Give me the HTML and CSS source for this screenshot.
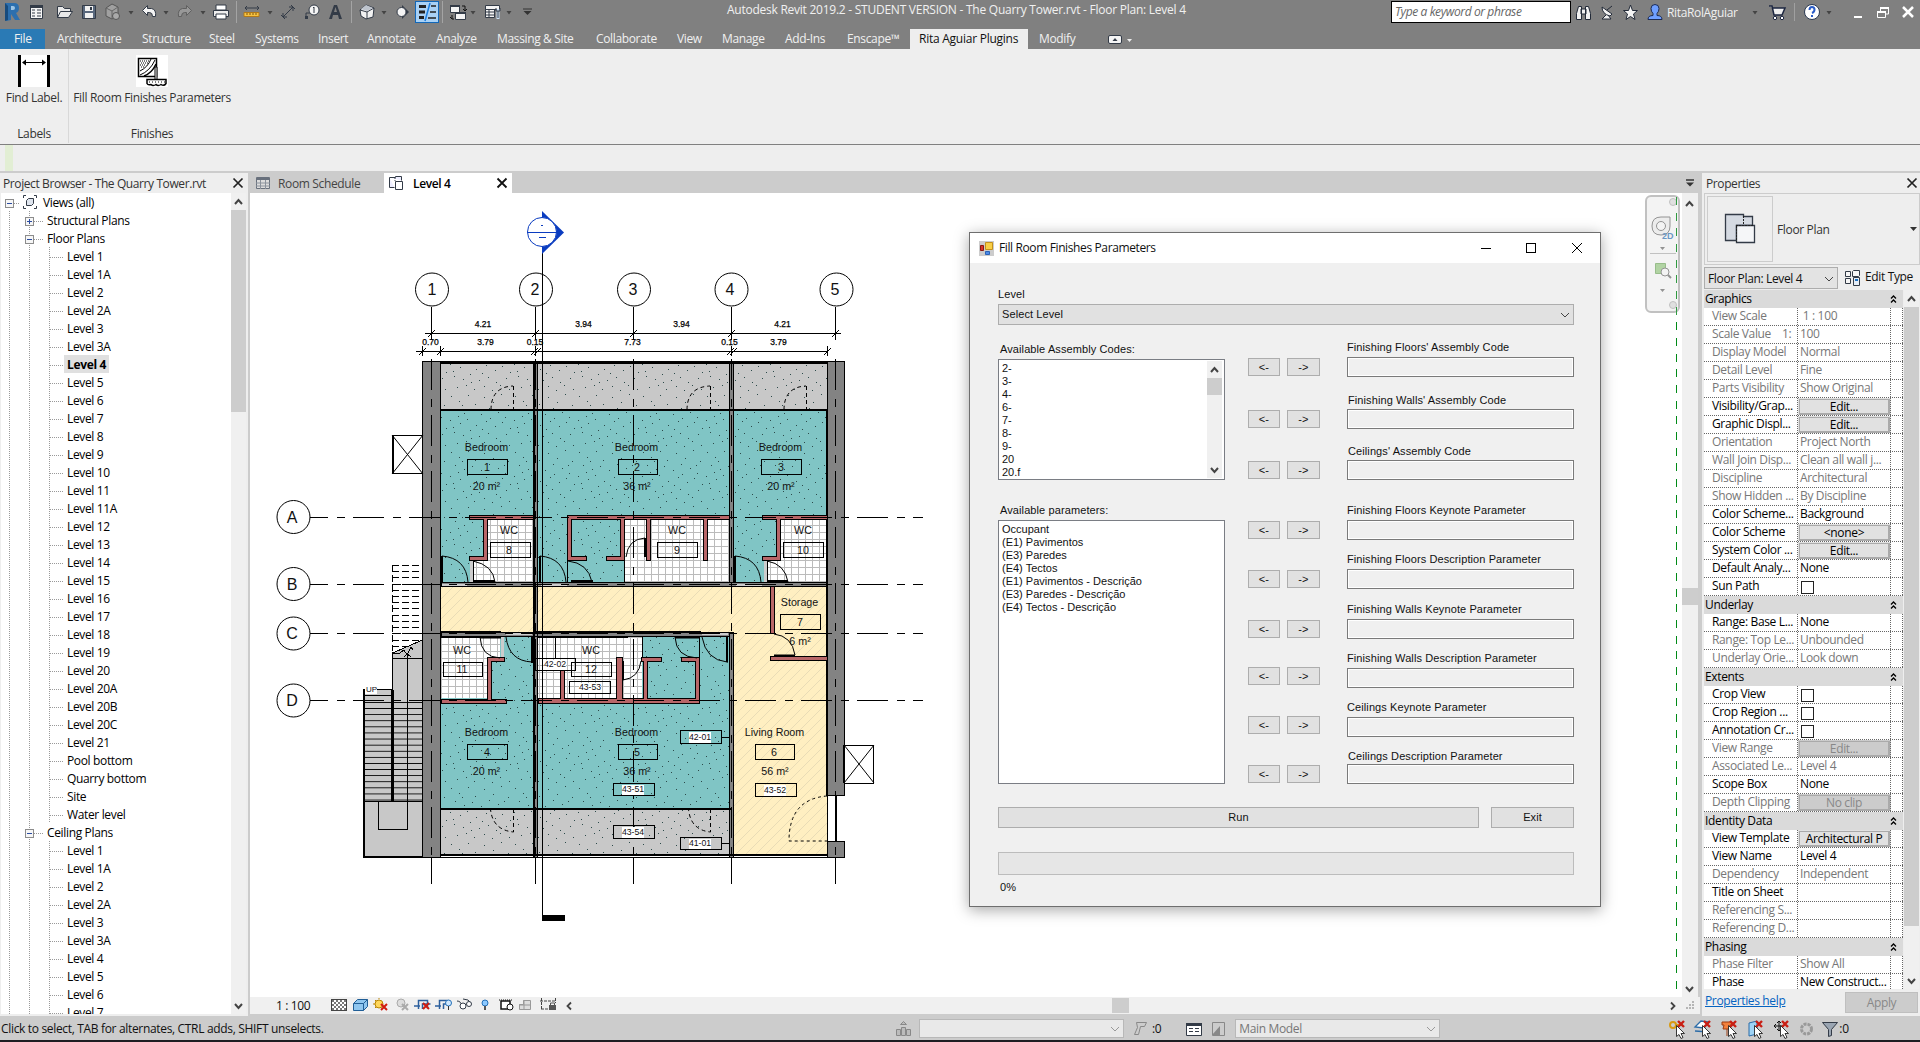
FILE: index.html
```html
<!DOCTYPE html>
<html lang="en">
<head>
<meta charset="utf-8">
<title>Autodesk Revit 2019.2 - The Quarry Tower.rvt</title>
<link rel="stylesheet" href="styles.css">
</head>
<body>
<div class="app">
<header class="titlebar">
  <svg class="qat" width="540" height="29" viewBox="0 0 540 29">
    <path d="M5 3h9q5 0 5 5q0 4-3 5l4 7h-5l-4-6v6l-5 1z" fill="#2c6fae"/><path d="M11 6h2q2 0 2 2t-2 2h-2z" fill="#9cc4e4"/><path d="M5 3l3 3v14l-3 1z" fill="#174b7d"/>
    <path d="M30.500 5.500h12v13h-12z" fill="#f4f4f4" stroke="#333b47"/><path d="M30 5h13v3h-13z" fill="#333b47"/><path d="M32 10h3M32 13h3M32 16h3M37 10h4M37 13h4M37 16h4" stroke="#333b47"/>
    <path d="M57.500 17.500v-11h5l2 2h6v3M57.500 17.500l3-6h12l-4 6z" fill="#e8e8e8" stroke="#333b47"/>
    <path d="M82.500 5.500h13v13h-13z" fill="#59687d" stroke="#333b47"/><path d="M85 6h8v5h-8zM85 13h8v5h-8z" fill="#f1f1f1"/><path d="M90 7h2v3h-2z" fill="#333b47"/>
    <path d="M106 8l6-4 6 3v8l-6 4-6-3z" fill="#a0a0a0" stroke="#555"/><path d="M106 8l6 3 6-4M112 11v8" stroke="#666" fill="none"/><circle cx="116" cy="16" r="3.500" fill="#aaa" stroke="#555"/>
    <path d="M128.500 11h5l-2.500 3.500zM163.500 11h5l-2.500 3.500zM200.500 11h5l-2.500 3.500zM267.500 11h5l-2.500 3.500zM381.500 11h5l-2.500 3.500zM470.500 11h5l-2.500 3.500zM506.500 11h5l-2.500 3.500z" fill="#444"/>
    <path d="M142.500 10.500l5-5v3h4q5 1 4 8h-3q0-4-3-4h-2v3z" fill="#f4f4f4" stroke="#333b47"/>
    <path d="M191.500 10.500l-5-5v3h-4q-5 1-4 8h3q0-4 3-4h2v3z" fill="#989898" stroke="#606060"/>
    <path d="M216 5h10v5h-10z" fill="#fff" stroke="#333b47"/><path d="M213.500 10.500h15v6h-15z" fill="#eee" stroke="#333b47"/><path d="M216 14h10v5h-10z" fill="#fff" stroke="#333b47"/>
    <path d="M236.500 1v22M351.500 1v22M442.500 1v22" stroke="#a4a4a4"/>
    <path d="M245 8h14M247 6l-2 2 2 2M257 6l2 2-2 2" stroke="#333b47" fill="none"/><path d="M244 12.500h15v4h-15z" fill="#f5c242" stroke="#b37a18"/><path d="M247 13v2M250 13v2M253 13v2M256 13v2" stroke="#7d5512"/>
    <path d="M283 17l10-10M281 15l4 4M291 5l4 4M283 13v4h4M293 11v-4h-4" stroke="#333b47" fill="none"/>
    <path d="M306 19v-6h5" stroke="#333b47" fill="none"/><path d="M305 16h3v3h-3z" fill="#333b47"/><circle cx="314" cy="10" r="5" fill="#f4f4f4" stroke="#333b47"/><path d="M313 8l1-1v6" stroke="#333b47" fill="none"/>
    <path d="M329 19l5-14h3l5 14h-3l-1-4h-5l-1 4zM334 12h3l-1.500-5z" fill="#333b47" fill-rule="evenodd"/>
    <path d="M360 10l6-5 8 3-1 9-7 2-5-3z" fill="#f1f1f1" stroke="#333b47"/><path d="M360 10l7 2 7-4M367 12v7" fill="none" stroke="#333b47"/><path d="M361 9l5-4 7 3-6 3z" fill="#bfc5ce"/>
    <path d="M402 5l7 7-7 7z" fill="#333b47"/><circle cx="401.500" cy="12" r="4.500" fill="#f4f4f4" stroke="#333b47"/>
    <rect x="415.500" y="1.500" width="23" height="21" fill="#a9d1f5" stroke="#1267b8"/><path d="M419 6.500h7M419 12h6M419 17.500h5" stroke="#222" stroke-width="3"/><path d="M431 6h5M430 12h6M428 18h8" stroke="#222" stroke-width="1.500"/><path d="M430 3l-5 18" stroke="#1b7ee0" stroke-width="1.500"/>
    <path d="M450.500 5.500h9v7h-9zM455.500 12.500h10v7h-10z" fill="#f4f4f4" stroke="#333b47"/><path d="M450 5h10v2h-10zM455 12h11v2h-11z" fill="#333b47"/><path d="M462 6h3v4M463 9l2 2 2-2M452 19v-4M450 17l2 2h2" stroke="#111" fill="none"/>
    <path d="M485.500 5.500h14v4h-14zM485.500 9.500h9v8h-9z" fill="#f4f4f4" stroke="#333b47"/><path d="M485 12h9M485 15h9M489 9v8" stroke="#333b47"/><path d="M498 9v10" stroke="#cfe3f7" stroke-width="3"/><path d="M496 8v3h4v-3M498 11v7" stroke="#333b47" fill="none"/>
    <path d="M523 9h9" stroke="#333"/><path d="M523.500 11h8l-4 4z" fill="#333"/>
  </svg>
  <div class="app-title"><span>Autodesk Revit 2019.2 - STUDENT VERSION - The Quarry Tower.rvt - Floor Plan: Level 4</span></div>
  <div class="search">Type a keyword or phrase</div>
  <svg width="95" height="29" viewBox="1572 0 95 29">
    <path d="M1576.500 19.500v-6l2-7h3v13zM1590.500 19.500v-6l-2-7h-3v13zM1581 9h5v5h-5z" fill="#f1f1f1" stroke="#222a38"/>
    <path d="M1602 7q0 7 8 9l2-2zM1606 15l-4 4h9l-3-4M1607 10l5-4" fill="#f1f1f1" stroke="#222a38"/>
    <path d="M1630.500 5l2 5.500h5l-4 3.500 1.500 5.500-4.500-3-4.500 3 1.500-5.500-4-3.500h5z" fill="#f4f4f4" stroke="#222a38"/>
    <path d="M1648 19.500q0-4 5-4v-2q-2-2-2-5 0-4 4-4t4 4q0 3-2 5v2q5 0 5 4z" fill="#6f9fff" stroke="#1c2b55"/>
  </svg>
  <span class="user">RitaRolAguiar</span>
  <svg width="180" height="29" viewBox="1740 0 180 29">
    <path d="M1752.500 11h5l-2.500 3.500zM1826.500 11h5l-2.500 3.500z" fill="#444"/>
    <path d="M1769 6h3l2 9h8l3-7h-12" fill="#eee" stroke="#1c2640" stroke-width="1.500"/><circle cx="1775" cy="18" r="1.700" fill="#fff" stroke="#1c2640"/><circle cx="1782" cy="18" r="1.700" fill="#fff" stroke="#1c2640"/>
    <path d="M1794.500 3v18" stroke="#a0a0a0"/>
    <circle cx="1812" cy="12" r="7.500" fill="#fff" stroke="#2a3850"/><path d="M1809.500 10q0-3 2.500-3t2.500 2.500-2.500 3.500M1812 15v2" stroke="#2a5cc8" stroke-width="2" fill="none"/>
    <path d="M1854 17h8" stroke="#fff" stroke-width="2"/><path d="M1880.500 11v-3h8v6h-3M1877.500 11.500h8v6h-8z" stroke="#fff" fill="none"/><path d="M1880 8h9M1877 12h9" stroke="#fff" stroke-width="2"/><path d="M1903 7l10 10M1913 7l-10 10" stroke="#fff" stroke-width="2.500"/>
  </svg>
</header>
<nav class="tabs">
  <span class="file">File</span><span>Architecture</span><span>Structure</span><span>Steel</span><span>Systems</span><span>Insert</span><span>Annotate</span><span>Analyze</span><span>Massing &amp; Site</span><span>Collaborate</span><span>View</span><span>Manage</span><span>Add-Ins</span><span>Enscape™</span><span class="on">Rita Aguiar Plugins</span><span>Modify</span>
  <svg width="30" height="20" viewBox="0 0 30 20"><rect x="1.500" y="6.500" width="13" height="8" rx="1.500" fill="#f4f4f4" stroke="#333b47"/><path d="M5.500 12h5l-2.500-3z" fill="#333b47"/><path d="M20 10h5l-2.500 3z" fill="#eee"/></svg>
</nav>
<section class="ribbon">
  <div class="rpanel labels">
    <svg width="32" height="32" viewBox="0 0 32 32"><path d="M0 0h32v32H0z" fill="#fff"/><path d="M1.500 0v32M30.500 0v32" stroke="#000" stroke-width="3"/><path d="M5 7.500h22" stroke="#000"/><path d="M4 7.500l4-3v6zM28 7.500l-4-3v6z"/></svg>
    <span>Find Label.</span><span class="cap">Labels</span>
  </div>
  <div class="rpanel finishes">
    <svg width="32" height="32" viewBox="0 0 32 32"><path d="M0 0h32v32H0z" fill="#fff"/><rect x="2.500" y="3.500" width="18" height="18" fill="none" stroke="#000" stroke-width="1.500"/><path d="M4 16q8-4 11-12M4 20q10-4 15-15" stroke="#000" fill="none"/><path d="M8 21q8-3 12-12" stroke="#000" stroke-width="1.500" fill="none"/><path d="M4 6h9M5 8h7M4 10h6M5 12h4" stroke="#000" stroke-dasharray="1 1"/><path d="M19 12h2v13h-2z" fill="#fff" stroke="#000"/><path d="M11 24.500h19v4q-2 3-5 1-3 2-5 0-3 2-5 0-3 1-4-1z" fill="#fff" stroke="#000" stroke-width="1.500"/><path d="M13 27h16" stroke="#000" stroke-dasharray="1 2"/></svg>
    <span>Fill Room Finishes Parameters</span><span class="cap">Finishes</span>
  </div>
</section>
<div class="optbar"><i></i></div>

<main class="work">
<aside class="browser">
  <div class="phead"><span>Project Browser - The Quarry Tower.rvt</span><svg width="12" height="12" viewBox="0 0 12 12"><path d="M1.500 1.500l9 9M10.500 1.500l-9 9" stroke="#222" stroke-width="1.700"/></svg></div>
  <div class="treebox">
    <ul class="tree">
      <li class="l0"><b class="box"></b><svg width="16" height="16" viewBox="0 0 16 16"><path d="M4 1.500H1.500V4M12 1.500h2.500V4M4 14.500H1.500V12M12 14.500h2.500V12" stroke="#333b47" fill="none"/><path d="M4.500 6.500l2-2h5v5l-2 2h-5z" fill="#dfe5ee" stroke="#333b47"/></svg>Views (all)</li>
      <li class="l1"><b class="box plus"></b>Structural Plans</li>
      <li class="l1"><b class="box"></b>Floor Plans</li>
      <li>Level 1</li><li>Level 1A</li><li>Level 2</li><li>Level 2A</li><li>Level 3</li><li>Level 3A</li><li class="cur"><em>Level 4</em></li><li>Level 5</li><li>Level 6</li><li>Level 7</li><li>Level 8</li><li>Level 9</li><li>Level 10</li><li>Level 11</li><li>Level 11A</li><li>Level 12</li><li>Level 13</li><li>Level 14</li><li>Level 15</li><li>Level 16</li><li>Level 17</li><li>Level 18</li><li>Level 19</li><li>Level 20</li><li>Level 20A</li><li>Level 20B</li><li>Level 20C</li><li>Level 21</li><li>Pool bottom</li><li>Quarry bottom</li><li>Site</li><li class="end">Water level</li>
      <li class="l1"><b class="box"></b>Ceiling Plans</li>
      <li>Level 1</li><li>Level 1A</li><li>Level 2</li><li>Level 2A</li><li>Level 3</li><li>Level 3A</li><li>Level 4</li><li>Level 5</li><li>Level 6</li><li>Level 7</li>
    </ul>
    <div class="vbar"><svg width="15" height="17" viewBox="0 0 15 17"><path d="M4 11l3.500-4 3.500 4" stroke="#444" stroke-width="2" fill="none"/></svg><i class="th1"></i><svg class="dn" width="15" height="17" viewBox="0 0 15 17"><path d="M4 7l3.500 4 3.500-4" stroke="#444" stroke-width="2" fill="none"/></svg></div>
  </div>
</aside>

<section class="center">
  <div class="viewtabs">
    <div class="vt"><svg width="16" height="14" viewBox="0 0 16 14"><path d="M1.500 1.500h13v11h-13z" fill="#ddd" stroke="#68707c"/><path d="M1 2h14v2H1z" fill="#68707c"/><path d="M1 7h14M1 10h14M5.500 4v9M10.500 4v9" stroke="#8b929c"/></svg><span>Room Schedule</span></div>
    <div class="vt on"><svg width="16" height="16" viewBox="0 0 16 16"><path d="M1.500 2.500h6v-1h6v4M1.500 2.500v10h5" fill="#eef" stroke="#333b47"/><path d="M7.500 6.500h7v8h-7z" fill="#fff" stroke="#333b47"/><path d="M7 3v4" stroke="#333b47" stroke-dasharray="1 1"/></svg><span>Level 4</span><svg class="x" width="12" height="12" viewBox="0 0 12 12"><path d="M1.500 1.500l9 9M10.500 1.500l-9 9" stroke="#111" stroke-width="1.800"/></svg></div>
    <svg class="menu" width="10" height="8" viewBox="0 0 10 8"><path d="M1 1h8" stroke="#333" stroke-width="1.500"/><path d="M1 3.500h8l-4 4z" fill="#333"/></svg>
  </div>
  <div class="canvasrow">
  <svg class="plan" width="1432" height="804" viewBox="250 193 1432 804" shape-rendering="crispEdges">
    <defs>
      <pattern id="dots" width="64" height="56" patternUnits="userSpaceOnUse"><path d="M3 4h1M11 9h1M20 3h1M27 12h1M36 5h1M45 10h1M53 2h1M60 13h1M7 17h1M16 21h1M24 18h1M33 22h1M41 16h1M50 20h1M57 25h1M2 28h1M12 31h1M19 27h1M28 33h1M38 29h1M47 34h1M54 30h1M62 36h1M6 40h1M15 43h1M22 38h1M31 44h1M40 41h1M48 46h1M58 42h1M9 51h1M18 49h1M26 53h1M36 50h1M44 54h1M52 49h1M61 53h1M14 13h1M42 26h1M5 35h1M34 37h1M56 17h1M23 46h1M10 24h1" stroke="#2c4a4a" transform="translate(0 .5)"/></pattern>
      <pattern id="tile" width="7" height="7" patternUnits="userSpaceOnUse"><path d="M0 .5h7M.5 0v7" stroke="#bbb"/></pattern>
      <pattern id="hatch" width="10" height="10" patternUnits="userSpaceOnUse"><path d="M-1 11L11 -1M-1 1L1 -1M9 11L11 9" stroke="#e9dcb6" shape-rendering="auto"/></pattern>
      <pattern id="tread" width="10" height="6.100" y="702" patternUnits="userSpaceOnUse"><path d="M0 .5h10" stroke="#000"/></pattern>
    </defs>
    <!-- balconies, bedrooms and circulation -->
    <g stroke="none">
      <path d="M441 362h387v48H441zM441 808h291v48H441z" fill="#c8c8c8"/>
      <path d="M441 410h386v173H441zM441 635h291v173H441z" fill="#80c5c5"/>
      <path d="M441 362h386v221H441zM441 635h291v221H441z" fill="url(#dots)"/>
      <path d="M441 586h386v269H733V632H441z" fill="#ffefc1"/><path d="M441 586h386v269H733V632H441z" fill="url(#hatch)"/>
      <g id="wet"><path d="M487 519h46v63h-60v-21h14zM624 519h105v63H624zM780 519h47v63h-60v-21h13zM441 636h59v22h-13v40h-46zM538 636h104v62H538z" fill="#fff"/><path d="M487 519h46v63h-60v-21h14zM624 519h105v63H624zM780 519h47v63h-60v-21h13zM441 636h59v22h-13v40h-46zM538 636h104v62H538z" fill="url(#tile)"/></g>
    </g>
    <!-- outside stair -->
    <path d="M363.500 689.500h29V653l30-13v217.500h-59z" fill="#c8c8c8" stroke="#000"/><path d="M364 702h58v99h-58z" fill="url(#tread)"/><path d="M364 695.500h28M392 658.500h30M364 801.500h58M407.500 654v175.500h-29V802M404 657l3.500-3 3.500 3M392 653h8l4-3 3 5 4-8 2 3" fill="none" stroke="#000"/><path d="M392.500 690v111" stroke="#000" stroke-width="3"/><path d="M364 689v168h58" fill="none" stroke="#000" stroke-width="2"/>
    <path d="M392.500 565v86M392 565.500h30M392 571.500h30M392 577.500h30M392 584.500h30M392 590.500h30M392 596.500h30M392 602.500h30M392 608.500h30M392 615.500h30M392 621.500h30M392 627.500h30M392 633.500h30M392 640.500h30M392 646.500h14" stroke="#000" stroke-dasharray="7 3" fill="none"/>
    <rect x="365" y="685" width="12" height="9" fill="#fff"/>
    <!-- structural walls -->
    <g fill="#838383" stroke="#000"><path d="M422.500 361.500h18v496h-18zM827.500 361.500h17v434h-17zM827.500 841.500h17v16h-17zM533.500 361.500h4v496h-4zM729.500 361.500h4v221h-4zM729.500 632.500h4v225h-4zM441 582.500h386v4H441zM441 632.500h288v4H441z"/></g>
    <path d="M441 362.500h386M441 410h386M441 855h386M441 808.500h291M441 632h60M534 632h167M441 636.500h60M538 636.500h90" stroke="#000" stroke-width="2"/><path d="M441 857.500h386M441 361.500h386M827.500 796v45" stroke="#000"/><path d="M836 796v45M827 410v386M534 361v496" stroke="#000" stroke-width="2"/>
    <path d="M442 583.500h25v2h-25zM541 583.500h26v2h-26zM736 583.500h26v2h-26zM506 633h26v2h-26zM702 633h26v2h-26zM470 561h3v21h-3zM764 561h3v21h-3zM501 637h3v20h-3z" fill="#ccc"/>
    <!-- partition walls -->
    <g fill="#b86668" stroke="#000"><path d="M469.500 515.500h64v4h-46v41h-18v-4h13.500v-37h-13.500zM567.500 515.500h162v4h-22v41h-4v-41h-53v41h-4v-41h-22v41h-18v-4h14v-37h-49v37h15v4h-19zM762.500 515.500h65v4h-47v41h-18v-4h14v-37h-14zM487.500 657.500h17v4h-13v38h15v4h-65v-4h46zM538.500 698.500h22v-29h4v29h52v-41h5.500v41h21v-37h-2v-4h20v4h-14v37h48v-37h-14v-4h18.500v46h-161zM770.500 586.500h4v47h-4zM770.500 656.500h57v4h-57z"/></g>
    <path d="M624.500 561v21M567.500 561v21M473.500 561v21M767.500 561v21M642.500 637v20M699.500 637v20M555.500 637v21" stroke="#000"/>
    <!-- door swings -->
    <g fill="none" stroke="#000" shape-rendering="auto">
      <path d="M442 556q24 2 26 26M473 561q20 4 22 21M540 556q24 2 26 26M568 561q20 2 24 21M735 556q24 2 26 26M767 561q18 3 21 21M626 557q2-18 19-19M480 637q1 20 20 21M506 637q3 24 26 25M675 637q1 20 22 21M702 637q4 23 25 25M641 661q-2 17-18 19M774 634q18 2 21 21"/>
      <path d="M442 556v26M473 581h22M540 556v26M571 581h22M735 556v26M767 581h21M645 538v19M480 637.500h21M532 636v27M675 637.500h24M727 636v26M623 661v19M774 655.500h21" stroke-width="2"/>
      <path d="M513.500 386v24M491 410q0-23 22-24M710.500 386v24M687 410q0-23 23-24M806.500 386v24M784 410q0-23 22-24M513.500 809v23q-21-2-23-23M710.500 809v23q-20-2-22-23" stroke-dasharray="4 3"/>
      <path d="M827 796q-38 3-38 45h38" stroke-dasharray="3 3"/>
    </g>
    <!-- voids -->
    <g fill="#fff" stroke="#000"><path d="M392.500 435.500h30v38h-30zM844.500 745.500h29v38h-29z"/><path d="M392 435l31 39M423 435l-31 39M844 745l30 38M874 745l-30 38" shape-rendering="auto"/><path d="M393 435v39M844 745v38" stroke-width="2"/></g>
    <!-- grid lines -->
    <g stroke="#000" fill="none" stroke-dasharray="31 9 8 8">
      <path d="M431.500 307v33M535.500 307v33M633.500 307v33M731.500 307v33M835.500 307v33" stroke-dasharray="none"/>
      <path d="M431.500 359v525M535.500 359v525M633.500 359v525M731.500 359v525M835.500 359v525"/><path d="M431.500 857v27M535.500 857v27M633.500 857v27M731.500 857v27M835.500 857v27" stroke-dasharray="none"/>
      <path d="M310 517.500h613M310 584.500h613M310 633.500h613M310 700.500h613" stroke-dashoffset="13"/>
    </g>
    <path d="M542.500 253v668" stroke="#000"/><path d="M542 915h23v6h-23z"/>
    <g fill="#fff" stroke="#000" shape-rendering="auto"><circle cx="432" cy="289.500" r="16.500"/><circle cx="536" cy="289.500" r="16.500" fill="none"/><circle cx="634" cy="289.500" r="16.500"/><circle cx="731.500" cy="289.500" r="16.500"/><circle cx="836.500" cy="289.500" r="16.500"/><circle cx="293.500" cy="517" r="16.500"/><circle cx="293.500" cy="584" r="16.500"/><circle cx="293.500" cy="633.500" r="16.500"/><circle cx="293.500" cy="700.500" r="16.500"/></g>
    <g class="bub"><text x="432" y="295">1</text><text x="535" y="295">2</text><text x="633" y="295">3</text><text x="730" y="295">4</text><text x="835" y="295">5</text><text x="292" y="523">A</text><text x="292" y="590">B</text><text x="292" y="639">C</text><text x="292" y="706">D</text></g>
    <!-- section mark -->
    <g shape-rendering="auto"><path d="M542 211l22 21.500-22 21.500z" fill="#0a3cc0"/><circle cx="542" cy="232" r="14.500" fill="#fff" stroke="#0a3cc0"/><path d="M527 232.500h36M541 225.500h2M539 237.500h7" stroke="#0a3cc0"/></g>
    <!-- dimensions -->
    <path d="M425 333.500h416M416 351.500h411M422.500 346v10M440.500 346v10M535.500 346v10M731.500 346v10M827.500 346v10" stroke="#000"/>
    <path d="M428 337l7-7M532 337l7-7M630 337l7-7M728 337l7-7M832 337l7-7M419 355l7-7M437 355l7-7M531 355l7-7M534 355l7-7M727 355l7-7M730 355l7-7M824 355l7-7" stroke="#000" shape-rendering="auto"/>
    <g class="dim"><text x="483" y="327">4.21</text><text x="583.500" y="327">3.94</text><text x="681.500" y="327">3.94</text><text x="782.500" y="327">4.21</text><text x="430.500" y="345">0.70</text><text x="485.500" y="345">3.79</text><text x="535" y="345">0.15</text><text x="632.500" y="345">7.73</text><text x="729.500" y="345">0.15</text><text x="778.500" y="345">3.79</text></g>
    <!-- room tags -->
    <path d="M467.500 459.500h40v15h-40zM618.500 459.500h39v15h-39zM761.500 459.500h40v15h-40zM490.500 542.500h40v15h-40zM657.500 542.500h40v15h-40zM783.500 542.500h40v15h-40zM443.500 662.500h39v14h-39zM571.500 662.500h40v14h-40zM467.500 744.500h40v15h-40zM618.500 744.500h39v15h-39zM755.500 744.500h39v15h-39zM780.500 614.500h40v15h-40z" fill="none" stroke="#000"/>
    <path d="M534.500 658.500h41v12h-41zM569.500 681.500h41v12h-41zM613.500 783.500h41v12h-41zM613.500 825.500h41v13h-41zM680.500 730.500h41v13h-41zM680.500 837.500h41v12h-41zM755.500 783.500h41v13h-41zM722 737.500h8M722 843.500h8" fill="none" stroke="#000"/>
    <path d="M544 660h22v10h-22zM579 683h22v10h-22zM622 785h22v10h-22zM622 827h22v11h-22zM689 732h22v11h-22zM689 839h22v10h-22zM764 785h22v11h-22z" fill="#fff"/>
    <g class="room"><text x="486.500" y="451">Bedroom</text><text x="487" y="471">1</text><text x="486.500" y="490">20 m²</text><text x="636.500" y="451">Bedroom</text><text x="637" y="471">2</text><text x="637" y="490">36 m²</text><text x="780.500" y="451">Bedroom</text><text x="781" y="471">3</text><text x="781" y="490">20 m²</text><text x="509" y="534">WC</text><text x="509" y="554">8</text><text x="677" y="534">WC</text><text x="677" y="554">9</text><text x="803" y="534">WC</text><text x="803" y="554">10</text><text x="462" y="654">WC</text><text x="462" y="673">11</text><text x="591" y="654">WC</text><text x="591" y="673">12</text><text x="486.500" y="736">Bedroom</text><text x="487" y="756">4</text><text x="486.500" y="775">20 m²</text><text x="636.500" y="736">Bedroom</text><text x="637" y="756">5</text><text x="637" y="775">36 m²</text><text x="774.500" y="736">Living Room</text><text x="774" y="756">6</text><text x="775" y="775">56 m²</text><text x="799.500" y="606">Storage</text><text x="800" y="626">7</text><text x="800" y="645">6 m²</text></g>
    <g class="key"><text x="555" y="667">42-02</text><text x="590" y="690">43-53</text><text x="633" y="792">43-51</text><text x="633" y="835">43-54</text><text x="700" y="740">42-01</text><text x="700" y="846">41-01</text><text x="775" y="793">43-52</text></g>
    <text class="up" x="366" y="692">UP</text>
    <path d="M1676.500 197v797" stroke="#008a17" stroke-dasharray="8 7.670"/>
    <!-- navigation bar -->
    <g shape-rendering="auto" fill="#f2f2f2" stroke="#bbb" opacity=".9"><rect x="1646" y="196" width="33" height="116" rx="5" stroke-width="2"/><circle cx="1673" cy="202" r="3.500" fill="#ddd"/><circle cx="1673" cy="305" r="3.500" fill="#ddd"/><path d="M1652 226q0-9 9-9h9v9q0 9-9 9t-9-9z" fill="#eaeaea" stroke="#888"/><circle cx="1661" cy="226" r="4.500" stroke="#888"/><path d="M1650 253.500h26" /><path d="M1655.500 263.500h10v10h-10z" fill="#a9cf9a" stroke="#8cb67e"/><circle cx="1665" cy="272" r="4" stroke="#888"/><path d="M1668 275l3 3" stroke="#888" stroke-width="2"/><path d="M1660 247h5l-2.500 3zM1660 289h5l-2.500 3z" fill="#888" stroke="none"/></g>
    <text class="twod" x="1662" y="239">2D</text><path d="M1676.500 197v120" stroke="#2f9a40" stroke-dasharray="8 7.670"/>
  </svg>
  <div class="vbar wide"><svg width="16" height="17" viewBox="0 0 16 17"><path d="M4 11l3.500-4 3.500 4" stroke="#444" stroke-width="2" fill="none"/></svg><i class="th2"></i><svg class="dn" width="16" height="17" viewBox="0 0 16 17"><path d="M4 7l3.500 4 3.500-4" stroke="#444" stroke-width="2" fill="none"/></svg></div>
  </div>
  <div class="viewbar"><span class="scale">1 : 100</span>
    <svg width="240" height="18" viewBox="325 997 240 18">
      <defs><pattern id="chk" width="4" height="4" patternUnits="userSpaceOnUse"><path d="M0 0h2v2H0zM2 2h2v2H2z" fill="#777"/></pattern></defs>
      <rect x="331.500" y="999.500" width="15" height="11" fill="#fff" stroke="#444"/><rect x="332" y="1000" width="14" height="10" fill="url(#chk)"/>
      <path d="M353.500 1003.500l4-4h10v7l-4 4h-10zM353.500 1003.500h10v7M363.500 1003.500l4-4" fill="#8fc6ef" stroke="#205e96"/>
      <circle cx="379" cy="1004" r="4" fill="#ffd75a" stroke="#b88300"/><path d="M373 1004h2M379 998v1M375 1000l1 1M375 1008l1-1" stroke="#b88300"/><path d="M381 1004l6 6M387 1004l-6 6" stroke="#d01c10" stroke-width="2"/>
      <circle cx="401" cy="1003" r="4" fill="#ddd" stroke="#aaa"/><path d="M402 1004l6 6M408 1004l-6 6" stroke="#aaa" stroke-width="2"/>
      <path d="M418.500 1009v-8.500h9v8M422.500 1009v-5h8M414 1006h6" stroke="#2c5f9d" fill="none" stroke-width="1.500"/><path d="M423 1003l6 6M429 1003l-6 6" stroke="#d01c10" stroke-width="2"/>
      <path d="M439.500 1009v-8.500h8M443.500 1009v-5h5M435 1006h6" stroke="#2c5f9d" fill="none" stroke-width="1.500"/><circle cx="448.500" cy="1003" r="3" fill="#cfe8ff" stroke="#2470b8"/><path d="M448.500 1006v4" stroke="#333"/>
      <path d="M457 1001q4 0 5 5M463 999q6 0 8 4" stroke="#333b47" fill="none"/><circle cx="463" cy="1006" r="3" fill="#fff" stroke="#333b47"/><circle cx="469" cy="1004" r="2.500" fill="#fff" stroke="#333b47"/>
      <circle cx="485" cy="1003" r="3" fill="#8cc9ff" stroke="#2470b8"/><path d="M485 1006v4" stroke="#555" stroke-width="2"/>
      <rect x="501" y="1001" width="9" height="8" fill="#fff" stroke="#111" stroke-width="1.500"/><circle cx="510" cy="1007" r="3" fill="#fff" stroke="#111"/><path d="M499 1000h13" stroke="#111" stroke-dasharray="1 1"/>
      <path d="M519.500 1009.500v-5h4v-4h7v9zM519 1005h11M524 1000v9" stroke="#999" fill="#ddd"/>
      <path d="M540 1001h16M541.500 998v12M555.500 998v5M541 1009h8" stroke="#444" stroke-dasharray="3 1"/><rect x="549" y="1005" width="7" height="5" fill="#555"/><path d="M550.500 1005v-2h4v2" stroke="#555" fill="none"/>
    </svg>
    <svg width="8" height="18" viewBox="0 0 8 18"><path d="M6 5.500L2.500 9 6 12.500" stroke="#444" stroke-width="1.800" fill="none"/></svg><i class="hth"></i><svg class="rt" width="8" height="18" viewBox="0 0 8 18"><path d="M2 5.500L5.500 9 2 12.500" stroke="#444" stroke-width="1.800" fill="none"/></svg><svg width="10" height="12" viewBox="0 0 10 12"><path d="M7 1h2v2H7zM4 4h2v2H4zM7 4h2v2H7zM1 7h2v2H1zM4 7h2v2H4zM7 7h2v2H7z" fill="#b5b5b5"/></svg>
  </div>
</section>

<aside class="props">
  <div class="phead"><span>Properties</span><svg width="12" height="12" viewBox="0 0 12 12"><path d="M1.500 1.500l9 9M10.500 1.500l-9 9" stroke="#222" stroke-width="1.700"/></svg></div>
  <div class="type"><div class="thumb"><svg width="32" height="32" viewBox="0 0 32 32"><path d="M1.500 1.500h18v2h9v9h-16v15h-11z" fill="#d5dae2" stroke="#333b47" stroke-width="1.300"/><path d="M12.500 12.500h18v17h-18z" fill="#f5f6f8" stroke="#333b47" stroke-width="1.300"/><path d="M19.500 3v9M12 12.500h17M12.500 13v16" stroke="#222" stroke-dasharray="2 1" fill="none"/></svg></div><span>Floor Plan</span><svg width="9" height="6" viewBox="0 0 9 6"><path d="M1 1h7L4.500 5z" fill="#333"/></svg></div>
  <div class="sel"><div class="combo">Floor Plan: Level 4<svg width="10" height="8" viewBox="0 0 10 8"><path d="M1 2l4 4 4-4" stroke="#444" fill="none"/></svg></div><svg width="17" height="16" viewBox="0 0 17 16"><path d="M1.500 1.500h5v5h-5zM1.500 8.500h5v5h-5zM8.500 1.500l1-1h6v5l-1 1h-6z" fill="#f6f6f6" stroke="#333b47"/><path d="M9.500 7.500h6v8h-6z" fill="#e5edf7" stroke="#333b47"/><path d="M11 9h3v2h-3z" fill="#1b6fc2"/></svg><span>Edit Type</span></div>
  <div class="gridrow">
  <div class="pgrid">
    <h4>Graphics<svg width="7" height="9" viewBox="0 0 7 9"><path d="M1 3.500L3.500 1 6 3.500M1 7.500L3.500 5 6 7.500" stroke="#000" stroke-width="1.300" fill="none"/></svg></h4>
    <p class="d"><span>View Scale</span><span>&nbsp;1 : 100</span><span></span></p>
    <p class="d"><span>Scale Value &nbsp;&nbsp; 1:</span><span>100</span><span></span></p>
    <p class="d"><span>Display Model</span><span>Normal</span><span></span></p>
    <p class="d"><span>Detail Level</span><span>Fine</span><span></span></p>
    <p class="d"><span>Parts Visibility</span><span>Show Original</span><span></span></p>
    <p><span>Visibility/Grap...</span><span class="b">Edit...</span><span></span></p>
    <p><span>Graphic Displ...</span><span class="b">Edit...</span><span></span></p>
    <p class="d"><span>Orientation</span><span>Project North</span><span></span></p>
    <p class="d"><span>Wall Join Disp...</span><span>Clean all wall j...</span><span></span></p>
    <p class="d"><span>Discipline</span><span>Architectural</span><span></span></p>
    <p class="d"><span>Show Hidden ...</span><span>By Discipline</span><span></span></p>
    <p><span>Color Scheme...</span><span>Background</span><span></span></p>
    <p><span>Color Scheme</span><span class="b">&lt;none&gt;</span><span></span></p>
    <p><span>System Color ...</span><span class="b">Edit...</span><span></span></p>
    <p><span>Default Analy...</span><span>None</span><span></span></p>
    <p><span>Sun Path</span><span><b></b></span><span></span></p>
    <h4>Underlay<svg width="7" height="9" viewBox="0 0 7 9"><path d="M1 3.500L3.500 1 6 3.500M1 7.500L3.500 5 6 7.500" stroke="#000" stroke-width="1.300" fill="none"/></svg></h4>
    <p><span>Range: Base L...</span><span>None</span><span></span></p>
    <p class="d"><span>Range: Top Le...</span><span>Unbounded</span><span></span></p>
    <p class="d"><span>Underlay Orie...</span><span>Look down</span><span></span></p>
    <h4>Extents<svg width="7" height="9" viewBox="0 0 7 9"><path d="M1 3.500L3.500 1 6 3.500M1 7.500L3.500 5 6 7.500" stroke="#000" stroke-width="1.300" fill="none"/></svg></h4>
    <p><span>Crop View</span><span><b></b></span><span></span></p>
    <p><span>Crop Region ...</span><span><b></b></span><span></span></p>
    <p><span>Annotation Cr...</span><span><b></b></span><span></span></p>
    <p class="d"><span>View Range</span><span class="b">Edit...</span><span></span></p>
    <p class="d"><span>Associated Le...</span><span>Level 4</span><span></span></p>
    <p><span>Scope Box</span><span>None</span><span></span></p>
    <p class="d"><span>Depth Clipping</span><span class="b">No clip</span><span></span></p>
    <h4>Identity Data<svg width="7" height="9" viewBox="0 0 7 9"><path d="M1 3.500L3.500 1 6 3.500M1 7.500L3.500 5 6 7.500" stroke="#000" stroke-width="1.300" fill="none"/></svg></h4>
    <p><span>View Template</span><span class="b">Architectural P</span><span></span></p>
    <p><span>View Name</span><span>Level 4</span><span></span></p>
    <p class="d"><span>Dependency</span><span>Independent</span><span></span></p>
    <p><span>Title on Sheet</span><span></span><span></span></p>
    <p class="d"><span>Referencing S...</span><span></span><span></span></p>
    <p class="d"><span>Referencing D...</span><span></span><span></span></p>
    <h4>Phasing<svg width="7" height="9" viewBox="0 0 7 9"><path d="M1 3.500L3.500 1 6 3.500M1 7.500L3.500 5 6 7.500" stroke="#000" stroke-width="1.300" fill="none"/></svg></h4>
    <p class="d"><span>Phase Filter</span><span>Show All</span><span></span></p>
    <p class="last"><span>Phase</span><span>New Construct...</span><span></span></p>
  </div>
  <div class="vbar"><svg width="15" height="17" viewBox="0 0 15 17"><path d="M4 11l3.500-4 3.500 4" stroke="#444" stroke-width="2" fill="none"/></svg><i class="th3"></i><svg class="dn" width="15" height="17" viewBox="0 0 15 17"><path d="M4 7l3.500 4 3.500-4" stroke="#444" stroke-width="2" fill="none"/></svg></div>
  </div>
  <div class="pfoot"><a>Properties help</a><span>Apply</span></div>
</aside>
</main>

<footer class="status">
  <span class="hint">Click to select, TAB for alternates, CTRL adds, SHIFT unselects.</span>
  <svg width="18" height="20" viewBox="0 0 18 20"><path d="M1.500 16.500v-6h4v6zM6.500 16.500v-8h4v8zM11.500 16.500v-6h4v6zM5.500 5.500l3-3 3 3z" fill="#bbb" stroke="#888"/></svg>
  <span class="cb c1"><svg width="10" height="8" viewBox="0 0 10 8"><path d="M1 2l4 4 4-4" stroke="#999" fill="none"/></svg></span>
  <svg class="g1" width="20" height="20" viewBox="0 0 20 20"><path d="M5.500 3.500h10l-2 4h-4l-2 8h-4l3-7z" fill="#ccc" stroke="#888"/></svg><span>:0</span>
  <svg class="g2" width="42" height="20" viewBox="0 0 42 20"><path d="M1.500 4.500h15v12h-15z" fill="#fff" stroke="#333b47"/><path d="M1 4h16v3H1z" fill="#333b47"/><path d="M4 9.500h4M4 12.500h4M10 9.500h4M10 12.500h4" stroke="#333b47"/><path d="M27.500 3.500h12v13h-12z" fill="#ccc" stroke="#888"/><path d="M27 16l8-9v9z" fill="#888"/></svg>
  <span class="cb c2">Main Model<svg width="10" height="8" viewBox="0 0 10 8"><path d="M1 2l4 4 4-4" stroke="#999" fill="none"/></svg></span>
  <svg class="sicons" width="172" height="22" viewBox="1666 1018 172 22">
    <defs><g id="sx"><path d="M9 2l6 6M15 2l-6 6" stroke="#c81e14" stroke-width="2.400"/><path d="M7.500 6.500v11l2.500-2 2 4 2-1-2-4h3.500z" fill="#fff" stroke="#222" stroke-width=".9"/></g></defs>
    <circle cx="1672" cy="1025" r="3" fill="none" stroke="#d99a12" stroke-width="2"/><path d="M1675 1025h7" stroke="#d99a12" stroke-width="2"/><use href="#sx" x="1668" y="1019"/>
    <path d="M1694 1027l6-6 8 1-5 6zM1694 1031l14 1" fill="#fff" stroke="#2c6ca8" stroke-width="1.300"/><use href="#sx" x="1694" y="1019"/>
    <path d="M1721 1022h10v3h-2l1 4h-8l1-4h-2zM1726 1029v7" fill="#f3803c" stroke="#9a3c12"/><use href="#sx" x="1720" y="1019"/>
    <path d="M1748 1023l8-2v13l-8 2z" fill="#9ed3f5" stroke="#2c6ca8"/><use href="#sx" x="1746" y="1019"/>
    <path d="M1778 1021v10M1773 1026h10M1776 1023l2-2 2 2M1776 1029l2 2 2-2M1775 1024l-2 2 2 2" stroke="#111" fill="none"/><use href="#sx" x="1772" y="1019"/>
    <circle cx="1805.500" cy="1029" r="5" fill="none" stroke="#999" stroke-width="3" stroke-dasharray="3 1"/>
    <path d="M1821.500 1022.500h15l-6 7v6l-3 1v-7z" fill="#9aa5b2" stroke="#333b47"/>
  </svg><span>:0</span>
</footer>
<div class="taskedge"></div>

<div class="dialog">
  <div class="dtitle"><svg width="15" height="15" viewBox="0 0 15 15"><path d="M0 0h15v15H0z" fill="#ccc"/><path d="M6.500 1.500h7v7h-7z" fill="#f8cf46" stroke="#c4901a"/><path d="M1.500 4.500h3v5h-3z" fill="#d8342a" stroke="#8c1810"/><path d="M6.500 10.500h4v3h-4z" fill="#4c8be8" stroke="#2b62b8"/></svg><span>Fill Room Finishes Parameters</span>
    <svg width="106" height="16" viewBox="0 0 106 16" shape-rendering="crispEdges"><path d="M3 8.500h10M48.500 3.500h9v9h-9z" fill="none" stroke="#000"/><path d="M94 3l10 10M104 3l-10 10" stroke="#000" shape-rendering="auto"/></svg></div>
  <div class="dbody">
    <div class="lvl">Level</div>
    <div class="dcombo">Select Level<svg width="10" height="8" viewBox="0 0 10 8"><path d="M1 2l4 4 4-4" stroke="#444" fill="none"/></svg></div>
    <div class="cols">
      <div class="lists">
        <div class="cap1">Available Assembly Codes:</div>
        <div class="list codes"><div>2-<br>3-<br>4-<br>6-<br>7-<br>8-<br>9-<br>20<br>20.f</div><div class="vbar"><svg width="15" height="17" viewBox="0 0 15 17"><path d="M4 11l3.500-4 3.500 4" stroke="#444" stroke-width="2" fill="none"/></svg><i class="th4"></i><svg class="dn" width="15" height="17" viewBox="0 0 15 17"><path d="M4 7l3.500 4 3.500-4" stroke="#444" stroke-width="2" fill="none"/></svg></div></div>
        <div class="cap2">Available parameters:</div>
        <div class="list prm"><div>Occupant<br>(E1) Pavimentos<br>(E3) Paredes<br>(E4) Tectos<br>(E1) Pavimentos - Descrição<br>(E3) Paredes - Descrição<br>(E4) Tectos - Descrição</div></div>
      </div>
      <div class="fields">
        <div><u>&lt;-</u><u>-&gt;</u><label>Finishing Floors' Assembly Code<i></i></label></div>
        <div><u>&lt;-</u><u>-&gt;</u><label class="in">Finishing Walls' Assembly Code<i></i></label></div>
        <div><u>&lt;-</u><u>-&gt;</u><label class="in">Ceilings' Assembly Code<i></i></label></div>
        <div><u>&lt;-</u><u>-&gt;</u><label>Finishing Floors Keynote Parameter<i></i></label></div>
        <div><u>&lt;-</u><u>-&gt;</u><label>Finishing Floors Description Parameter<i></i></label></div>
        <div><u>&lt;-</u><u>-&gt;</u><label>Finishing Walls Keynote Parameter<i></i></label></div>
        <div class="up1"><u>&lt;-</u><u>-&gt;</u><label>Finishing Walls Description Parameter<i></i></label></div>
        <div class="up1"><u>&lt;-</u><u>-&gt;</u><label>Ceilings Keynote Parameter<i></i></label></div>
        <div><u>&lt;-</u><u>-&gt;</u><label class="in">Ceilings Description Parameter<i></i></label></div>
      </div>
    </div>
    <div class="acts"><u>Run</u><u>Exit</u></div>
    <div class="prog"></div>
    <div class="pct">0%</div>
  </div>
</div>
</div>
</body>
</html>
```
FILE: styles.css
```css
* { box-sizing: border-box; }
body { margin: 0; font: 12px/18px "Open Sans", "Noto Sans", sans-serif; letter-spacing: -0.35px; color: #111; background: #eee; overflow: hidden; }
svg { display: block; flex: none; }
i, u, em { font-style: normal; text-decoration: none; }
.app { position: relative; width: 1920px; height: 1042px; display: flex; flex-direction: column; }

/* title bar */
.titlebar { height: 29px; background: #808080; display: flex; color: #f0f0f0; flex: none; }
.app-title { width: 851px; padding: 1px 0 0 187px; white-space: nowrap; letter-spacing: -0.25px; }
.search { width: 180px; height: 22px; margin: 1px 1px 0 0; border: 1px solid #000; background: #fff; color: #666; font-style: italic; padding: 1px 0 0 3px; flex: none; white-space: nowrap; letter-spacing: -0.4px; }
.user { width: 73px; padding-top: 4px; margin-left: 0; white-space: nowrap; }
.tabs { height: 20px; background: #808080; color: #f0f0f0; flex: none; display: grid; grid-template-columns: 45px 87px 67px 46px 63px 49px 69px 61px 99px 81px 45px 63px 62px 73px 118px 79px 30px; line-height: 20px; white-space: nowrap; }
.tabs span { padding-left: 12px; }
.tabs span:nth-child(n+3):nth-child(-n+14) { padding-left: 10px; }
.tabs .file { background: #2a7ab5; padding-left: 14px; }
.tabs .on { background: #eee; color: #111; padding-left: 9px; letter-spacing: -0.25px; }
.tabs span:nth-child(16) { padding-left: 11px; }

/* ribbon */
.ribbon { height: 96px; background: #eee; border-bottom: 1px solid #808080; display: flex; flex: none; color: #333; }
.rpanel { display: flex; flex-direction: column; align-items: center; padding-top: 6px; height: 94px; white-space: nowrap; }
.rpanel span { margin-top: 2px; }
.rpanel .cap { margin-top: 18px; }
.labels { width: 69px; border-right: 1px solid #d8d8d8; }
.finishes { width: 166px; }
.optbar { height: 26px; background: #eee; flex: none; padding-left: 5px; }
.optbar i { display: block; width: 8px; height: 26px; background: #e2eed4; }

/* work area */
.work { height: 845px; background: #ccc; padding-top: 2px; display: grid; grid-template-columns: 248px 1450px 218px; column-gap: 2px; flex: none; }
.phead { height: 20px; background: #eee; display: flex; justify-content: space-between; align-items: center; padding: 0 4px 0 3px; color: #333; white-space: nowrap; }
.phead span { padding-top: 2px; letter-spacing: -0.4px; }
.browser { background: #eee; height: 843px; }
.treebox { display: flex; justify-content: space-between; height: 821px; overflow: hidden; padding: 0 2px 0 1px; }
.tree { list-style: none; margin: 0; padding: 0; width: 230px; background: #fff; flex: none; }
.tree li { height: 18px; line-height: 19px; padding-left: 66px; white-space: nowrap; color: #000;
  background: repeating-linear-gradient(90deg,#999 0 1px,transparent 1px 2px) 49px 10px/14px 1px no-repeat, repeating-linear-gradient(#999 0 1px,transparent 1px 2px) 48px 0/1px 18px no-repeat, repeating-linear-gradient(#999 0 1px,transparent 1px 2px) 28px 0/1px 18px no-repeat, repeating-linear-gradient(#999 0 1px,transparent 1px 2px) 8px 0/1px 18px no-repeat; }
.tree li.l1 { display: flex; align-items: center; padding-left: 24px; background: repeating-linear-gradient(90deg,#999 0 1px,transparent 1px 2px) 33px 10px/10px 1px no-repeat, repeating-linear-gradient(#999 0 1px,transparent 1px 2px) 28px 0/1px 18px no-repeat, repeating-linear-gradient(#999 0 1px,transparent 1px 2px) 8px 0/1px 18px no-repeat; }
.tree li.l0 { display: flex; align-items: center; padding-left: 4px; background: repeating-linear-gradient(90deg,#999 0 1px,transparent 1px 2px) 13px 10px/6px 1px no-repeat; }
.box { width: 9px; height: 9px; border: 1px solid #8c8c8c; background: linear-gradient(#2b4ca0,#2b4ca0) 1px 3px/5px 1px no-repeat #f6f6f6; margin: 3px 13px 0 0; }
.l0 .box { margin-right: 8px; }
.l0 svg { margin-right: 5px; }
.plus { background: linear-gradient(#2b4ca0,#2b4ca0) 1px 3px/5px 1px no-repeat, linear-gradient(#2b4ca0,#2b4ca0) 3px 1px/1px 5px no-repeat #f6f6f6; }
.cur em { font-weight: 700; background: #e0e0e0; margin-left: -3px; padding: 0 3px; display: inline-block; height: 18px; }
.vbar { width: 15px; background: #f0f0f0; display: flex; flex-direction: column; flex: none; }
.vbar i { background: #cdcdcd; }
.vbar .dn { margin-top: auto; }
.th1 { height: 202px; }

/* view area */
.viewtabs { height: 20px; display: flex; align-items: center; color: #444; }
.vt { width: 134px; height: 20px; display: flex; align-items: center; gap: 7px; padding-left: 5px; white-space: nowrap; }
.vt span { padding-top: 2px; }
.vt.on { width: 128px; background: #fff; color: #000; font-weight: 600; padding-left: 4px; gap: 9px; }
.vt .x { margin-left: auto; margin-right: 4px; }
.viewtabs .menu { margin-left: auto; margin-right: 5px; }
.canvasrow { display: flex; height: 804px; }
.plan { background: #fff; }
.plan text { font-family: "Liberation Sans", Arial, sans-serif; letter-spacing: 0; fill: #111; }
.plan .bub { font-size: 16px; text-anchor: middle; }
.plan .dim { font-size: 8.5px; text-anchor: middle; }
.plan .dim text { fill: #000; stroke: #000; stroke-width: .25px; }
.plan .room { font-size: 10.7px; text-anchor: middle; }
.plan .key { font-size: 8.7px; text-anchor: middle; }
.plan .up { font-size: 8px; }
.plan .twod { font-size: 9px; font-weight: 700; fill: #6a97c4; }
.wide { width: 16px; padding-top: 2px; }
.th2 { height: 17px; margin-top: 376px; }
.viewbar { height: 17px; background: #f0f0f0; display: flex; align-items: center; padding-right: 5px; }
.scale { width: 75px; padding-left: 26px; }
.hth { width: 17px; height: 15px; background: #cdcdcd; margin-left: 539px; }
.viewbar .rt { margin-left: auto; margin-right: 8px; }

/* properties */
.props { background: #eee; height: 843px; padding-left: 2px; }
.props .phead { padding: 0 2px 0 2px; }
.type { height: 72px; border: 1px solid #ccc; display: flex; align-items: center; padding: 2px 1px 2px 2px; color: #333; }
.type span { padding-top: 2px; }
.thumb { width: 66px; height: 66px; border: 1px solid #ccc; display: grid; place-items: center; margin-right: 4px; }
.type > svg { margin-left: auto; }
.sel { height: 25px; display: flex; align-items: center; gap: 6px; white-space: nowrap; padding-top: 1px; }
.sel > span { margin-left: -2px; margin-top: -3px; }
.combo { width: 134px; height: 22px; border: 1px solid #adadad; background: #e3e3e3; display: flex; align-items: center; justify-content: space-between; padding: 1px 3px 0; }
.gridrow { display: flex; height: 699px; overflow: hidden; gap: 1px; }
.pgrid { width: 199px; background: #fff; flex: none; }
.pgrid h4 { margin: 0; height: 18px; background: #dadada; font-weight: 400; padding: 0 6px 0 1px; display: flex; justify-content: space-between; align-items: center; color: #000; }
.pgrid p { margin: 0; height: 18px; display: grid; grid-template-columns: 94px 93px 12px; border-bottom: 1px dotted #666; line-height: 16px; white-space: nowrap; color: #000; }
.pgrid p.last { height: 15px; border-bottom: 0; }
.pgrid p.d { color: #777; }
.pgrid p span { border-right: 1px dotted #666; padding-left: 2px; overflow: hidden; }
.pgrid p span:first-child { padding-left: 8px; }
.pgrid p .b { background: linear-gradient(#aaa,#aaa) 1px 1px/91px 1px no-repeat, linear-gradient(#aaa,#aaa) 1px 15px/91px 2px no-repeat, linear-gradient(#aaa,#aaa) 1px 1px/1px 16px no-repeat, linear-gradient(#aaa,#aaa) 90px 1px/2px 16px no-repeat, #e1e1e1; text-align: center; padding: 1px 0 0; line-height: 16px; }
.pgrid p.d .b { background-color: #ccc; color: #888; }
.pgrid b { display: block; width: 13px; height: 13px; border: 1px solid #222; margin: 3px 0 0 1px; background: #fff; }
.th3 { height: 619px; }
.pfoot { display: flex; justify-content: space-between; height: 27px; padding: 3px 0 0 1px; }
.pfoot a { color: #0563c1; text-decoration: underline; }
.pfoot span { width: 73px; height: 21px; background: #ccc; border: 1px solid #bfbfbf; color: #888; text-align: center; line-height: 19px; margin-right: 2px; }

/* status bar */
.status { height: 24px; background: #ccc; display: flex; align-items: center; flex: none; white-space: nowrap; padding-top: 1px; }
.hint { width: 895px; padding-left: 1px; letter-spacing: -0.33px; }
.cb { height: 19px; border: 1px solid #b8b8b8; background: #e9e9e9; color: #777; display: flex; align-items: center; justify-content: space-between; padding: 0 3px; line-height: 17px; flex: none; }
.c1 { width: 205px; margin-left: 6px; }
.c1 svg { margin-left: auto; }
.g1 { margin: 0 1px 0 7px; }
.g2 { margin: 0 8px 0 24px; }
.c2 { width: 205px; }
.sicons { margin-left: 227px; }
.taskedge { height: 2px; background: #1e1c22; }

/* finishes dialog floats above the canvas */
.dialog { position: absolute; left: 969px; top: 232px; width: 632px; height: 675px; background: #f0f0f0; border: 1px solid #6e6e6e; box-shadow: 0 3px 14px rgba(0,0,0,.35); color: #111; font: 11px/13px "Liberation Sans", Arial, sans-serif; letter-spacing: .1px; }
.dtitle { height: 30px; background: #fff; display: flex; align-items: center; padding: 0 16px 0 9px; gap: 5px; font: 12px/18px "Open Sans", sans-serif; letter-spacing: -.38px; }
.dtitle svg:last-child { margin-left: auto; }
.dbody { padding: 25px 26px 0 28px; }
.lvl { height: 16px; }
.dcombo { height: 21px; border: 1px solid #adadad; background: #e1e1e1; display: flex; justify-content: space-between; align-items: center; padding: 0 3px; }
.cols { display: flex; height: 482px; justify-content: space-between; }
.lists { width: 227px; padding-top: 18px; }
.cap1 { padding-left: 2px; height: 16px; }
.cap2 { padding: 1px 0 0 2px; height: 17px; margin-top: 23px; }
.list { background: #fff; border: 1px solid #7a7d84; display: flex; justify-content: space-between; padding: 2px 2px 2px 3px; letter-spacing: 0; }
.codes { height: 121px; }
.codes .vbar { margin: -1px 0; }
.th4 { height: 17px; }
.prm { height: 264px; }
.fields { width: 326px; padding-top: 15px; }
.fields div { height: 37px; display: flex; align-items: flex-end; margin-bottom: 12px; }
.fields div:nth-child(1) { margin-bottom: 15px; }
.fields div:nth-child(2) { margin-bottom: 14px; }
.fields div:nth-child(3) { margin-bottom: 23px; }
.fields div:nth-child(5) { margin-bottom: 13px; }
.fields div:nth-child(8) { margin-bottom: 10px; }
u { background: #e1e1e1; border: 1px solid #adadad; text-align: center; }
.fields u { width: 32px; height: 18px; margin: 0 7px 1px 0; line-height: 17px; flex: none; }
.fields u + u { width: 33px; margin-right: 27px; }
.fields .up1 u { margin-bottom: 3px; }
.fields label { flex: 1; height: 36px; white-space: nowrap; display: flex; flex-direction: column; justify-content: space-between; }
.fields .in { text-indent: 1px; }
.fields div:nth-child(2) label, .fields div:nth-child(3) label { height: 35px; }
.fields i { display: block; height: 20px; border: 1px solid #7a7a7a; box-shadow: inset 0 0 0 1px #fff; }
.fields div:last-child label { height: 34px; }
.acts { display: flex; gap: 12px; }
.acts u { height: 21px; width: 481px; line-height: 19px; flex: none; }
.acts u + u { width: 83px; }
.prog { margin-top: 24px; height: 23px; border: 1px solid #bcbcbc; background: #e6e6e6; }
.pct { padding: 6px 0 0 2px; }
```
